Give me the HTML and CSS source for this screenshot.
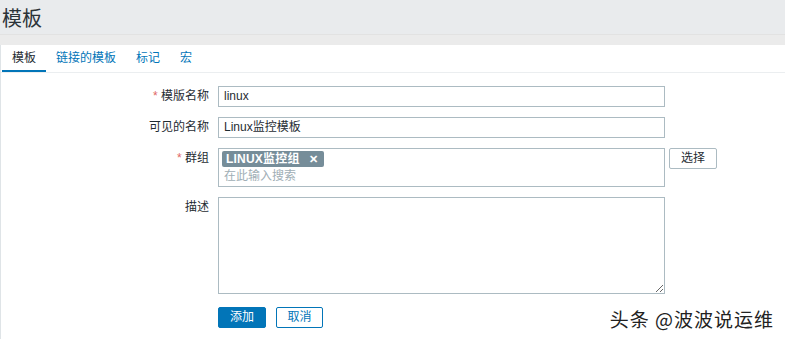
FILE: index.html
```html
<!DOCTYPE html>
<html lang="zh">
<head>
<meta charset="utf-8">
<title>模板</title>
<link rel="stylesheet" href="styles.css">
</head>
<body>
<header class="page-header">
  <h1 class="page-title">模板</h1>
</header>
<div class="header-rule"></div>
<main class="panel">
  <nav class="tabs">
    <span class="tab active">模板</span>
    <span class="tab">链接的模板</span>
    <span class="tab">标记</span>
    <span class="tab">宏</span>
  </nav>
  <form class="form">
    <div class="row">
      <label class="label"><span class="req">*</span> 模版名称</label>
      <div class="field"><div class="input">linux</div></div>
    </div>
    <div class="row">
      <label class="label">可见的名称</label>
      <div class="field"><div class="input">Linux监控模板</div></div>
    </div>
    <div class="row">
      <label class="label top"><span class="req">*</span> 群组</label>
      <div class="field field-inline">
        <div class="multiselect">
          <span class="tag">LINUX监控组<span class="tag-x">✕</span></span>
          <span class="placeholder">在此输入搜索</span>
        </div>
        <span class="btn-select">选择</span>
      </div>
    </div>
    <div class="row">
      <label class="label top2">描述</label>
      <div class="field"><textarea class="textarea"></textarea></div>
    </div>
    <div class="row actions">
      <span class="label"></span>
      <div class="field buttons">
        <span class="btn primary">添加</span>
        <span class="btn secondary">取消</span>
      </div>
    </div>
  </form>
  <div class="watermark">头条 @波波说运维</div>
</main>
</body>
</html>
```
FILE: styles.css
```css
* { box-sizing: border-box; }
html, body { height: 100%; }
body {
  margin: 0;
  background: #ebebeb;
  font-family: "Liberation Sans", Arial, "Noto Sans CJK SC", sans-serif;
  font-size: 12px;
  color: #1f2c33;
  display: flex;
  flex-direction: column;
  overflow: hidden;
}
.page-header {
  height: 34px;
  background: #e9ebed;
  display: flex;
  align-items: center;
  padding-left: 2px;
}
.page-title {
  margin: 0;
  font-size: 20px;
  font-weight: normal;
  color: #2b3338;
}
.header-rule {
  height: 1px;
  background: #e2e2e2;
  margin-bottom: 10px;
}
.panel {
  position: relative;
  flex: 1;
  background: #fff;
  border-left: 1px solid #dfe4e7;
}
.tabs {
  display: flex;
  height: 28px;
  border-bottom: 1px solid #ebeef0;
  padding-left: 1px;
}
.tab {
  padding: 0 10px;
  line-height: 26px;
  color: #0275b8;
  border-bottom: 2px solid transparent;
}
.tab.active {
  color: #1f2c33;
  border-bottom-color: #0275b8;
}
.form {
  padding-top: 13px;
  display: flex;
  flex-direction: column;
  gap: 10px;
}
.row {
  display: grid;
  grid-template-columns: 208px 447px;
  column-gap: 9px;
}
.label {
  text-align: right;
  line-height: 21px;
  color: #1f2c33;
}
.label.top { padding-top: 0; }
.label.top2 { padding-top: 0; }
.req { color: #e06666; }
.field-inline {
  display: flex;
  align-items: flex-start;
  gap: 4px;
}
.input {
  height: 21px;
  border: 1px solid #acbbc2;
  padding: 0 5px;
  line-height: 19px;
  background: #fff;
}
.multiselect {
  width: 447px;
  flex: none;
  height: 39px;
  border: 1px solid #acbbc2;
  padding: 2px 3px;
  display: flex;
  flex-direction: column;
  align-items: flex-start;
  gap: 1px;
}
.tag {
  background: #768d99;
  color: #fff;
  line-height: 16px;
  height: 16px;
  padding: 0 6px 0 4px;
  border-radius: 2px;
  font-weight: bold;
  letter-spacing: 0.2px;
}
.tag-x { margin-left: 9px; font-size: 11px; font-weight: bold; }
.placeholder {
  color: #a0aeb5;
  line-height: 16px;
  padding-left: 2px;
}
.btn-select {
  flex: none;
  width: 48px;
  height: 21px;
  line-height: 19px;
  text-align: center;
  border: 1px solid #acbbc2;
  border-radius: 2px;
  background: #fff;
  color: #1f2c33;
}
.textarea {
  display: block;
  width: 447px;
  height: 97px;
  border: 1px solid #acbbc2;
  margin: 0;
  padding: 0;
  font: inherit;
  resize: both;
}
.actions { margin-top: 3px; }
.buttons { display: flex; gap: 10px; }
.btn {
  width: 48px;
  height: 21px;
  line-height: 19px;
  text-align: center;
  border-radius: 2px;
  border: 1px solid #0275b8;
}
.btn.primary { background: #0275b8; color: #fff; }
.btn.secondary { background: #fff; color: #0275b8; width: 47px; }
.watermark {
  position: absolute;
  right: 11px;
  bottom: 7px;
  font-size: 19px;
  letter-spacing: 1px;
  color: #222;
  text-shadow: 1px 1px 0 #fff, -1px -1px 0 #fff;
  font-family: "Noto Sans CJK SC", sans-serif;
}
```
